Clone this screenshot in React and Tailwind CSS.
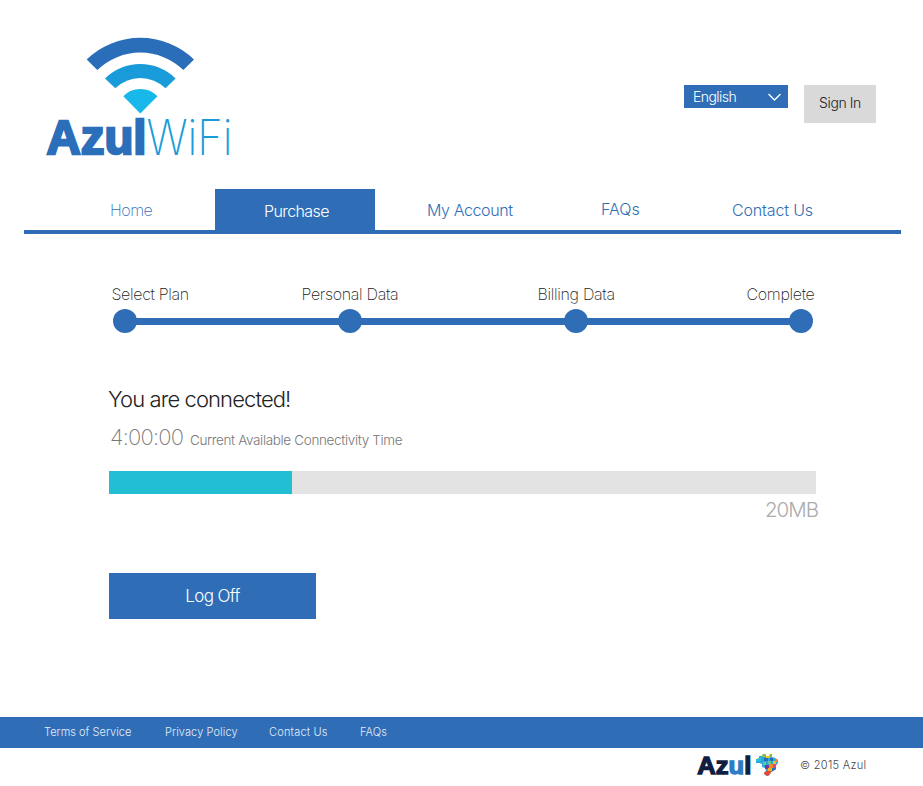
import React from 'react';

function WifiLogo() {
  return (
    <svg className="ml-[44px] mt-[34px] block h-[146px] w-[216px] overflow-visible" viewBox="44 34 216 146" role="img" aria-label="Azul WiFi">
      <path d="M86.700 59.500A77 77 0 0 1 194 59.500L183.400 70A62 62 0 0 0 97.300 70Z" fill="#2a6db8" />
      <path d="M105 78.500A50.500 50.500 0 0 1 175.600 78.500L165.500 88.300A36 36 0 0 0 115.300 88.300Z" fill="#1a9bd9" />
      <path d="M123.300 96.300Q130 89 140.300 89Q150.600 89 157.500 96.300L140.300 113.500Z" fill="#18b8ea" />
      <text x="46.500" y="153.800" textLength="100" lengthAdjust="spacingAndGlyphs" fontFamily="'Liberation Sans', sans-serif" fontWeight="700" fontSize="47.500" fill="#2b6fba" stroke="#2b6fba" strokeWidth="2.400">Azul</text>
      <text x="146.500" y="155" textLength="86" lengthAdjust="spacingAndGlyphs" fontFamily="Inter, sans-serif" fontWeight="200" fontSize="49.500" fill="#1a9bd9">WiFi</text>
    </svg>
  );
}

function AzulMark() {
  return (
    <svg className="block h-[34px] w-[84px]" viewBox="696 750 84 34" role="img" aria-label="Azul">
      <text x="697.300" y="774.200" textLength="54" lengthAdjust="spacingAndGlyphs" fontFamily="'Liberation Sans', sans-serif" fontWeight="700" fontSize="24.800" fill="#111e42" stroke="#111e42" strokeWidth="1.400">
        Az<tspan fill="#2f7cc4" stroke="#2f7cc4">u</tspan>l
      </text>
      <clipPath id="brazil">
        <path d="M757 759l2-1v-2h3l1-2h3v2h3l1-2h2v3l3 1 3 2v3l-2 2v4l-3 2-2 1-1 2-2 2-3-1-1-2 2-2-1-3-3-1v-3l-3-1h-3l-2-2z" />
      </clipPath>
      <g clipPath="url(#brazil)">
        <path d="M756 753h23v24h-23z" fill="#2aa7dc" />
        <path d="M756 757h5v4h-5z" fill="#2bc0d8" />
        <path d="M762 753h4v4h-4zM770 753h3v4h-3z" fill="#86c440" />
        <path d="M766 755h4v3h-4zM773 761h3v3h-3z" fill="#f0c224" />
        <path d="M764 758h4v3h-4zM770 758h3v3h-3z" fill="#276fb7" />
        <path d="M775 758h4v4h-4zM769 764h4v4h-4z" fill="#f08a2b" />
        <path d="M763 762h3v3h-3zM768 761h3v3h-3z" fill="#63c59a" />
        <path d="M773 764h4v4h-4z" fill="#e2457c" />
        <path d="M765 765h4v4h-4z" fill="#793a96" />
        <path d="M772 768h4v3h-4z" fill="#276fb7" />
        <path d="M768 768h4v3h-4z" fill="#f4b223" />
        <path d="M764 771h9v6h-9z" fill="#e84632" />
      </g>
    </svg>
  );
}

function Header() {
  return (
    <header className="flex h-[189px] items-start">
      <WifiLogo />
      <button className="ml-[424px] mt-[85px] flex h-[23px] w-[104px] items-center justify-between bg-[#2f6eb6] pl-[9px] pr-[7px] pb-px text-[14px] font-light tracking-[-0.55px] text-white">
        <span>English</span>
        <svg className="mt-px h-[8px] w-[13px]" viewBox="0 0 13 8" fill="none" stroke="white" strokeWidth="1.300">
          <path d="M.5 1l6 6 6-6" />
        </svg>
      </button>
      <button className="ml-[16px] mt-[85px] h-[38px] w-[72px] bg-[#d9d9d9] pb-[3px] text-[14px] font-light tracking-[-0.4px] text-[#222]">Sign In</button>
    </header>
  );
}

function Nav() {
  return (
    <nav className="mx-[24px] flex h-[45px] w-[877px] whitespace-nowrap border-b-4 border-[#2f6eb6] text-[16px] leading-[24px] text-[#2f6eb6]">
      <a className="w-[191px] pl-[86px] pt-[9px] font-extralight tracking-[-0.5px]">Home</a>
      <a className="w-[160px] bg-[#2f6eb6] pl-[49px] pt-[10px] font-light tracking-[-0.6px] text-white">Purchase</a>
      <a className="w-[200px] pl-[52px] pt-[9px] font-light tracking-[-0.4px]">My Account</a>
      <a className="w-[120px] pl-[26px] pt-[8px] font-light tracking-[0px]">FAQs</a>
      <a className="pl-[37px] pt-[9px] font-light tracking-[-0.15px]">Contact Us</a>
    </nav>
  );
}

const steps = [
  { label: 'Select Plan', width: 'w-[190px]' },
  { label: 'Personal Data', width: 'w-[236px]' },
  { label: 'Billing Data', width: 'w-[209px]' },
  { label: 'Complete', width: 'w-[80px]' },
];

function Progress() {
  return (
    <section className="mt-[47px] h-[53px]">
      <div className="flex h-[27px] whitespace-nowrap pl-[111.5px] text-[16px] font-extralight leading-[26px] tracking-[-0.33px] text-[#222]">
        {steps.map((step) => (
          <span key={step.label} className={step.width}>{step.label}</span>
        ))}
      </div>
      <div className="ml-[113px] flex h-[26px] w-[700px] items-center">
        {steps.map((step, i) => (
          <React.Fragment key={step.label}>
            {i > 0 && <i className="-mx-px h-[7px] flex-1 bg-[#2f6eb6]" />}
            <i className="size-[24px] shrink-0 rounded-full bg-[#2f6eb6]" />
          </React.Fragment>
        ))}
      </div>
    </section>
  );
}

export default function App() {
  return (
    <div className="flex h-[786px] w-[923px] flex-col overflow-hidden bg-white font-['Inter',sans-serif]">
      <Header />
      <Nav />
      <Progress />
      <main className="ml-[109px] mt-[49px] w-[709px] whitespace-nowrap font-light">
        <h1 className="-ml-px h-[32px] text-[22px] leading-[32px] tracking-[-0.9px] text-[#222]">You are connected!</h1>
        <div className="mt-[6px] flex h-[32px] items-baseline leading-[32px] text-[#777]">
          <span className="w-[81px] pl-px text-[22px] font-extralight tracking-[-0.8px]">4:00:00</span>
          <span className="text-[13.5px] tracking-[-0.35px]">Current Available Connectivity Time</span>
        </div>
        <div className="mt-[18px] h-[23px] w-[707px] bg-[#e3e3e3]">
          <div className="h-full w-[183px] bg-[#22bed3]" />
        </div>
        <p className="h-[33px] text-right text-[20.5px] leading-[32px] tracking-[-1px] text-[#aaa]">20MB</p>
        <button className="mt-[46px] h-[46px] w-[207px] bg-[#2f6eb6] pt-[2px] text-[17px] font-light tracking-[-0.6px] text-white">Log Off</button>
      </main>
      <footer className="mt-auto h-[69px] whitespace-nowrap">
        <div className="flex h-[31px] bg-[#2f6eb6] pl-[44px] text-[11px] font-light leading-[30px] tracking-[0.1px] text-[#e3edf8]">
          <a className="w-[121px] tracking-[0.02px]">Terms of Service</a>
          <a className="w-[104px]">Privacy Policy</a>
          <a className="w-[91px] tracking-[0.2px]">Contact Us</a>
          <a>FAQs</a>
        </div>
        <div className="flex pl-[696px] pt-[2px]">
          <AzulMark />
          <span className="ml-[20px] text-[11px] font-light leading-[31px] tracking-[0.3px] text-[#444]">© 2015 Azul</span>
        </div>
      </footer>
    </div>
  );
}
